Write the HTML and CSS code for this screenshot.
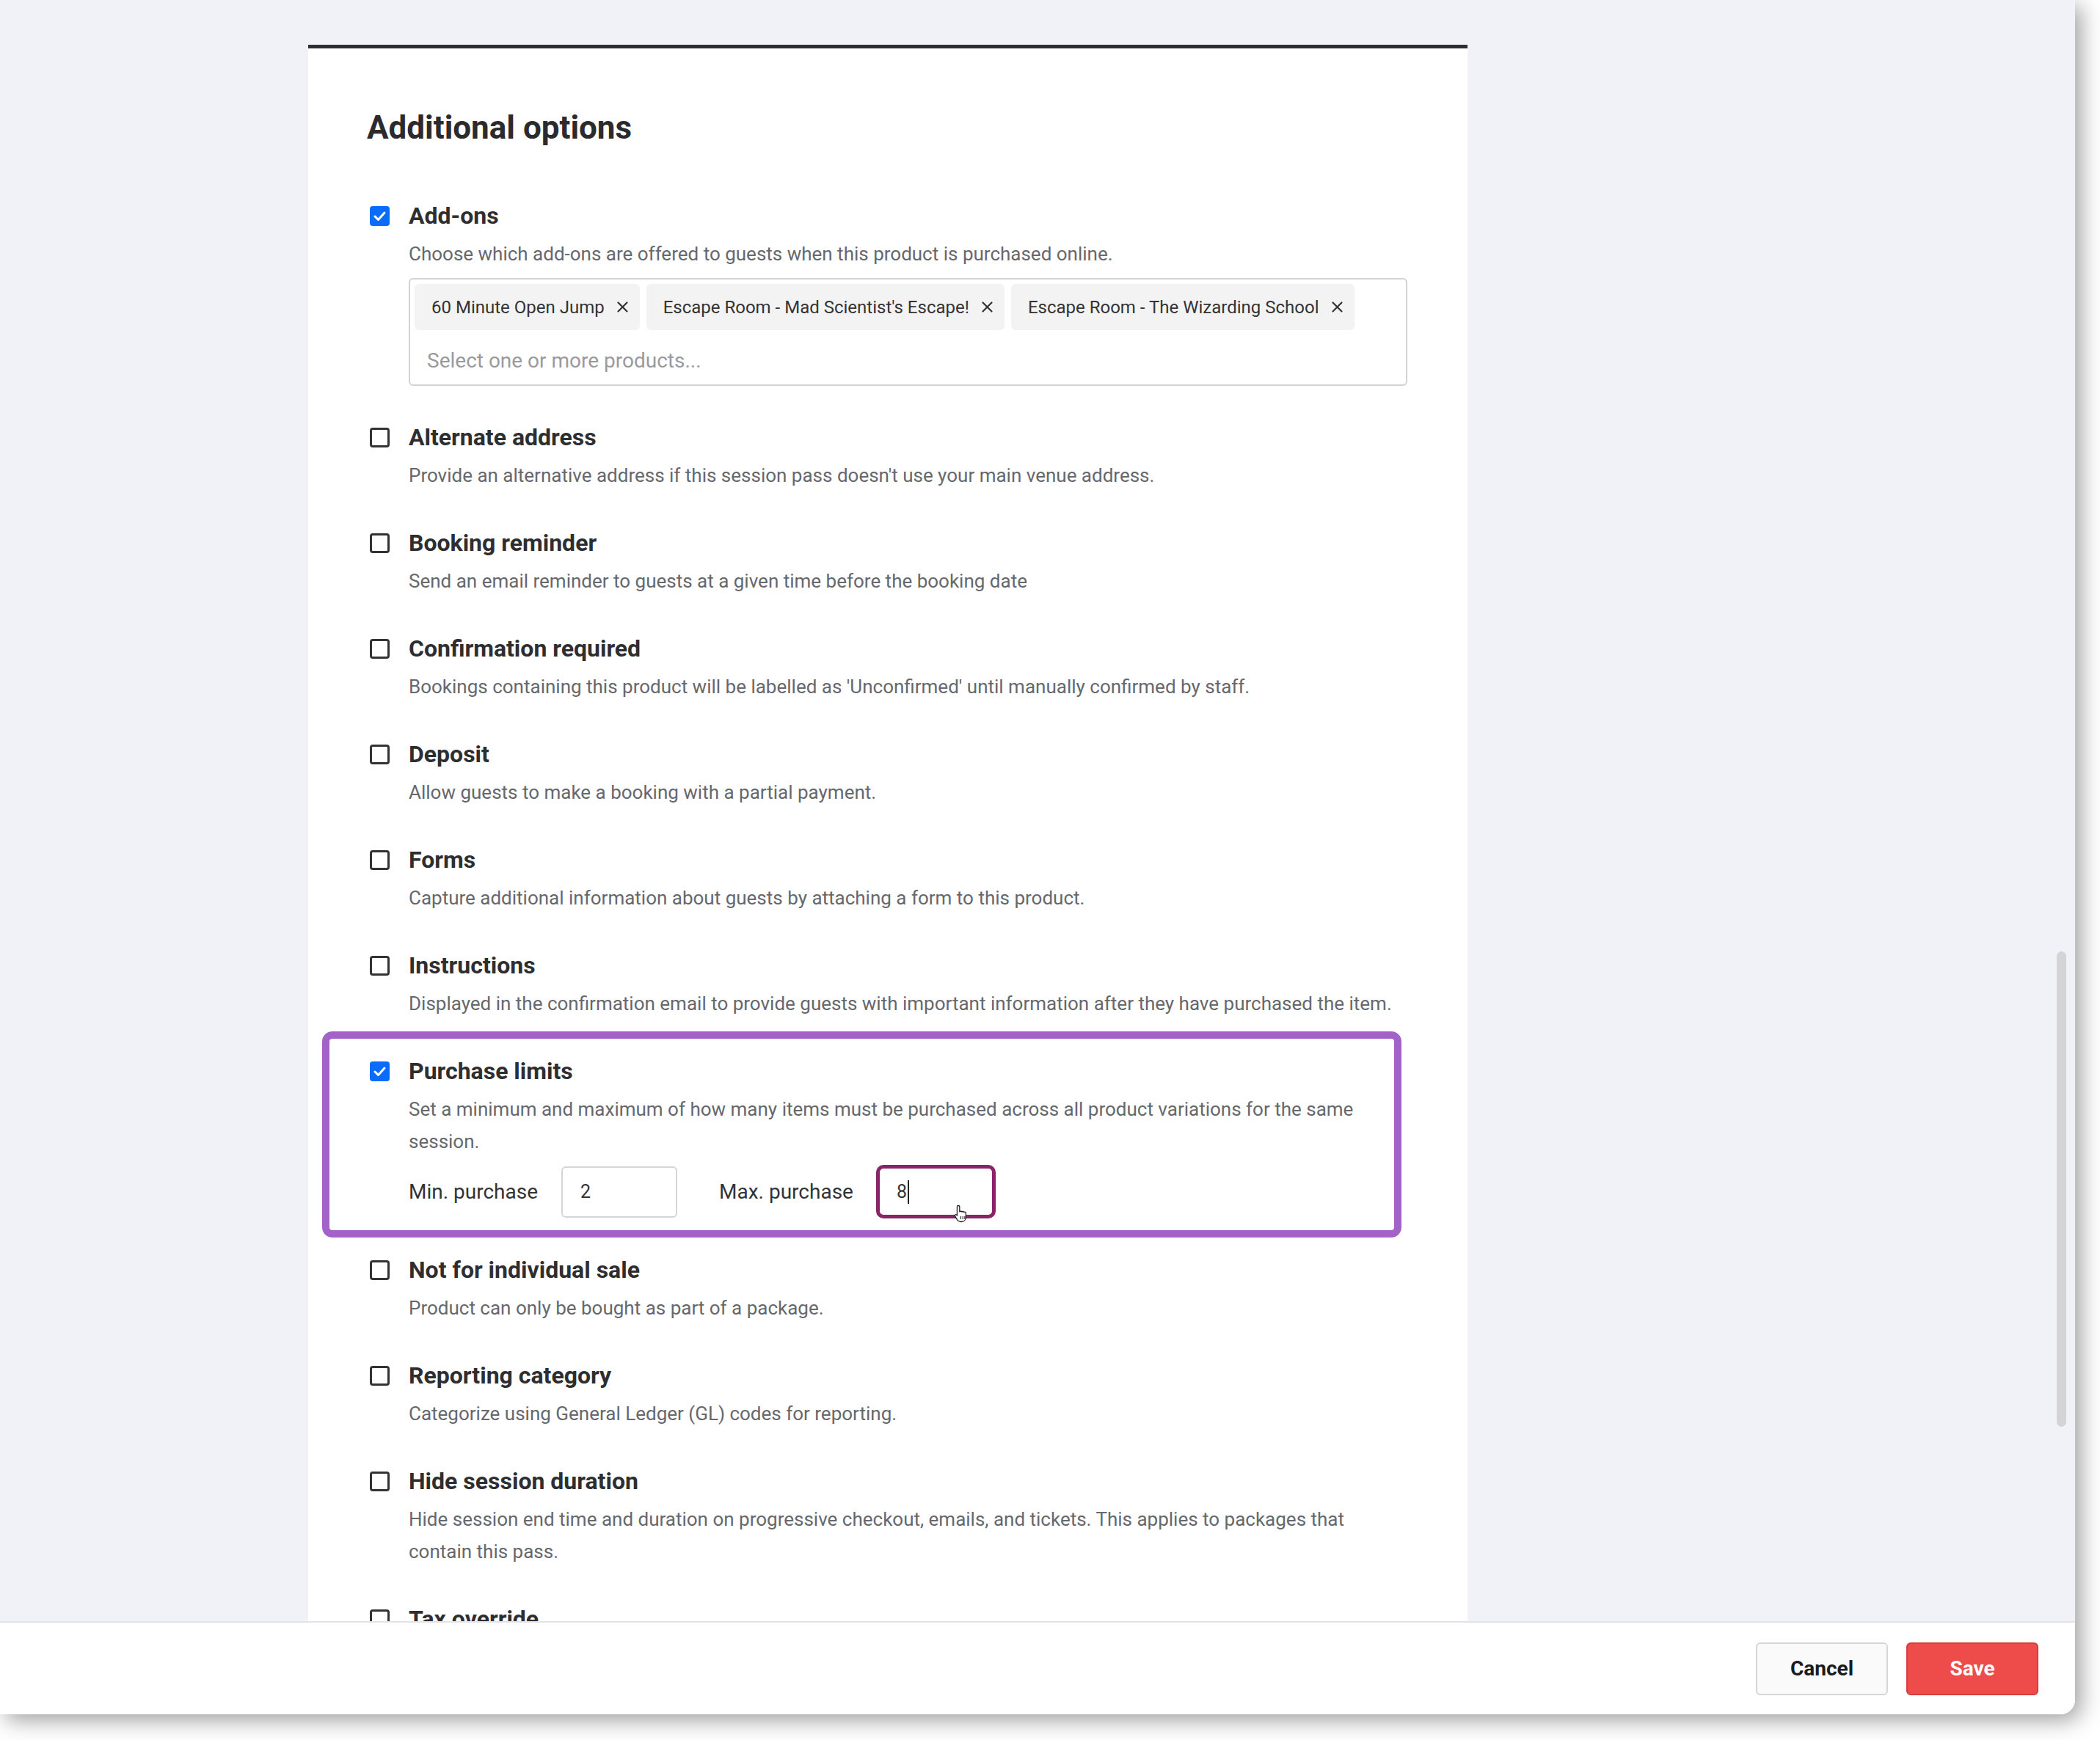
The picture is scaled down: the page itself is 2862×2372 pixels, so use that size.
FILE: index.html
```html
<!DOCTYPE html>
<html lang="en">
  <head>
    <meta charset="UTF-8" />
    <meta name="viewport" content="width=device-width, initial-scale=1.0" />
    <title>Additional options</title>
    <link rel="stylesheet" href="styles.css">
  </head>
  <body>
    <div class="window">
      <div class="main">
        <div class="card">
          <h2 class="card-title">Additional options</h2>

          <div class="options">
            <div class="option">
              <span class="check checked">
                <svg viewBox="0 0 27 27" width="27" height="27"><path d="M7 14l4.5 4.5L20 9" fill="none" stroke="#fff" stroke-width="3" stroke-linecap="round" stroke-linejoin="round"/></svg>
              </span>
              <div class="option-body">
                <div class="option-label">Add-ons</div>
                <p class="option-desc">Choose which add-ons are offered to guests when this product is purchased online.</p>
                <div class="multi">
                  <div class="chips">
                    <span class="chip">60 Minute Open Jump
                      <svg class="chip-x" viewBox="0 0 17 17" width="17" height="17"><path d="M2.5 2.5l12 12M14.5 2.5l-12 12" stroke="#333" stroke-width="2.2" stroke-linecap="round"/></svg>
                    </span>
                    <span class="chip">Escape Room - Mad Scientist's Escape!
                      <svg class="chip-x" viewBox="0 0 17 17" width="17" height="17"><path d="M2.5 2.5l12 12M14.5 2.5l-12 12" stroke="#333" stroke-width="2.2" stroke-linecap="round"/></svg>
                    </span>
                    <span class="chip">Escape Room - The Wizarding School
                      <svg class="chip-x" viewBox="0 0 17 17" width="17" height="17"><path d="M2.5 2.5l12 12M14.5 2.5l-12 12" stroke="#333" stroke-width="2.2" stroke-linecap="round"/></svg>
                    </span>
                  </div>
                  <div class="multi-placeholder">Select one or more products...</div>
                </div>
              </div>
            </div>

            <div class="option">
              <span class="check"></span>
              <div class="option-body">
                <div class="option-label">Alternate address</div>
                <p class="option-desc">Provide an alternative address if this session pass doesn't use your main venue address.</p>
              </div>
            </div>

            <div class="option">
              <span class="check"></span>
              <div class="option-body">
                <div class="option-label">Booking reminder</div>
                <p class="option-desc">Send an email reminder to guests at a given time before the booking date</p>
              </div>
            </div>

            <div class="option">
              <span class="check"></span>
              <div class="option-body">
                <div class="option-label">Confirmation required</div>
                <p class="option-desc">Bookings containing this product will be labelled as 'Unconfirmed' until manually confirmed by staff.</p>
              </div>
            </div>

            <div class="option">
              <span class="check"></span>
              <div class="option-body">
                <div class="option-label">Deposit</div>
                <p class="option-desc">Allow guests to make a booking with a partial payment.</p>
              </div>
            </div>

            <div class="option">
              <span class="check"></span>
              <div class="option-body">
                <div class="option-label">Forms</div>
                <p class="option-desc">Capture additional information about guests by attaching a form to this product.</p>
              </div>
            </div>

            <div class="option">
              <span class="check"></span>
              <div class="option-body">
                <div class="option-label">Instructions</div>
                <p class="option-desc">Displayed in the confirmation email to provide guests with important information after they have purchased the item.</p>
              </div>
            </div>

            <div class="option">
              <span class="check checked">
                <svg viewBox="0 0 27 27" width="27" height="27"><path d="M7 14l4.5 4.5L20 9" fill="none" stroke="#fff" stroke-width="3" stroke-linecap="round" stroke-linejoin="round"/></svg>
              </span>
              <div class="option-body">
                <div class="option-label">Purchase limits</div>
                <p class="option-desc">Set a minimum and maximum of how many items must be purchased across all product variations for the same session.</p>
                <div class="limits">
                  <label class="limit-label">Min. purchase</label>
                  <div class="limit-input">2</div>
                  <label class="limit-label max">Max. purchase</label>
                  <div class="limit-input focused">8<span class="caret"></span>
                    <svg class="pointer" viewBox="0 0 22 26" width="22" height="26"><path d="M7 2.5c1.1 0 1.8.8 1.8 1.8v6.6c.3-.9 2.7-.9 3 .2.5-.9 2.6-.8 2.9.4.6-.7 2.6-.5 2.6 1.1v5.6c0 3.5-2.3 6.3-5.8 6.3H10c-2.1 0-3.3-1-4.4-2.6L2.4 16.6c-.7-1.1.9-2.6 2.1-1.5l.9 1V4.3c0-1 .6-1.8 1.6-1.8z" fill="#fff" stroke="#222" stroke-width="1.3" stroke-linejoin="round"/><path d="M10.5 17v4M13.2 17v4M15.9 17v4" stroke="#222" stroke-width="1.1"/></svg>
                  </div>
                </div>
              </div>
              <div class="highlight-frame"></div>
            </div>

            <div class="option">
              <span class="check"></span>
              <div class="option-body">
                <div class="option-label">Not for individual sale</div>
                <p class="option-desc">Product can only be bought as part of a package.</p>
              </div>
            </div>

            <div class="option">
              <span class="check"></span>
              <div class="option-body">
                <div class="option-label">Reporting category</div>
                <p class="option-desc">Categorize using General Ledger (GL) codes for reporting.</p>
              </div>
            </div>

            <div class="option">
              <span class="check"></span>
              <div class="option-body">
                <div class="option-label">Hide session duration</div>
                <p class="option-desc">Hide session end time and duration on progressive checkout, emails, and tickets. This applies to packages that contain this pass.</p>
              </div>
            </div>

            <div class="option">
              <span class="check"></span>
              <div class="option-body">
                <div class="option-label">Tax override</div>
              </div>
            </div>
          </div>
        </div>

        <div class="scrollbar"></div>
      </div>

      <div class="footer">
        <button class="btn btn-cancel">Cancel</button>
        <button class="btn btn-save">Save</button>
      </div>
    </div>
  </body>
</html>
```

FILE: styles.css
```css
* {
  box-sizing: border-box;
}

html,
body {
  margin: 0;
  background: #ffffff;
  font-family: Roboto, "Liberation Sans", Arial, sans-serif;
}

body {
  width: 2862px;
  height: 2372px;
  overflow: hidden;
}

.window {
  width: 2828px;
  height: 2337px;
  display: flex;
  flex-direction: column;
  background: #f1f2f7;
  border-bottom-right-radius: 20px;
  box-shadow: 8px 8px 30px rgba(0, 0, 0, 0.38);
  overflow: hidden;
}

.main {
  position: relative;
  flex: 1;
  overflow: hidden;
  padding-top: 61px;
}

.card {
  width: 1580px;
  margin-left: 420px;
  background: #ffffff;
  border-top: 5px solid #2e2e31;
  padding: 83px 82px 200px 80px;
}

.card-title {
  margin: 0;
  font-size: 44px;
  line-height: 50px;
  font-weight: 700;
  color: #2b2b2e;
}

.options {
  margin-top: 75px;
  display: flex;
  flex-direction: column;
  gap: 50px;
}

.option {
  position: relative;
  display: grid;
  grid-template-columns: 57px 1fr;
}

.check {
  width: 27px;
  height: 27px;
  margin: 7px 0 0 4px;
  border: 3px solid #333336;
  border-radius: 4px;
}

.check.checked {
  border: none;
  background: #0b6cfb;
}

.check svg {
  display: block;
}

.option-label {
  font-size: 32px;
  line-height: 40px;
  font-weight: 700;
  color: #2e2e31;
}

.option-desc {
  margin: 10px 0 0;
  font-size: 26px;
  line-height: 44px;
  color: #66686d;
}

/* multi select */
.multi {
  margin-top: 11px;
  border: 2px solid #d3d3d3;
  border-radius: 6px;
  padding: 6px;
}

.chips {
  display: flex;
  flex-wrap: wrap;
  gap: 9px;
}

.chip {
  display: flex;
  align-items: center;
  height: 63px;
  padding: 0 15px 0 23px;
  background: #f3f3f3;
  border-radius: 6px;
  font-size: 24px;
  color: #333336;
}

.chip-x {
  margin-left: 16px;
}

.multi-placeholder {
  margin: 22px 0 6px 17px;
  font-size: 28px;
  line-height: 40px;
  color: #9a9a9e;
}

/* purchase limits */
.limits {
  margin-top: 10px;
  display: flex;
  align-items: center;
}

.limit-label {
  font-size: 28px;
  color: #333336;
  margin-right: 32px;
}

.limit-label.max {
  margin-left: 57px;
  margin-right: 31px;
}

.limit-input {
  position: relative;
  display: flex;
  align-items: center;
  width: 158px;
  height: 70px;
  padding-left: 24px;
  border: 2px solid #d6d6d6;
  border-radius: 6px;
  font-size: 25px;
  color: #333336;
}

.limit-input.focused {
  width: 163px;
  height: 73px;
  padding-left: 23px;
  border: 5px solid #8a2469;
  border-radius: 10px;
}

.caret {
  display: inline-block;
  width: 2px;
  height: 32px;
  margin-left: 1px;
  background: #222;
}

.pointer {
  position: absolute;
  left: 100px;
  top: 48px;
}

.highlight-frame {
  position: absolute;
  top: -34px;
  left: -61px;
  right: 8px;
  bottom: -26px;
  border: 10px solid #a362c7;
  border-radius: 14px;
  pointer-events: none;
}

.scrollbar {
  position: absolute;
  top: 1297px;
  right: 12px;
  width: 13px;
  height: 648px;
  border-radius: 7px;
  background: #d4d4d7;
}

/* footer */
.footer {
  flex: 0 0 127px;
  display: flex;
  justify-content: flex-end;
  align-items: center;
  gap: 25px;
  padding-right: 50px;
  background: #ffffff;
  border-top: 2px solid #e2e3e6;
}

.btn {
  height: 72px;
  width: 180px;
  border-radius: 6px;
  font-family: Roboto, "Liberation Sans", Arial, sans-serif;
  font-size: 28px;
  font-weight: 700;
}

.btn-cancel {
  background: #fafafa;
  border: 2px solid #d6d6d6;
  color: #1c1c1e;
}

.btn-save {
  background: #ee4b4b;
  border: 2px solid #d63c3f;
  color: #ffffff;
}
```
